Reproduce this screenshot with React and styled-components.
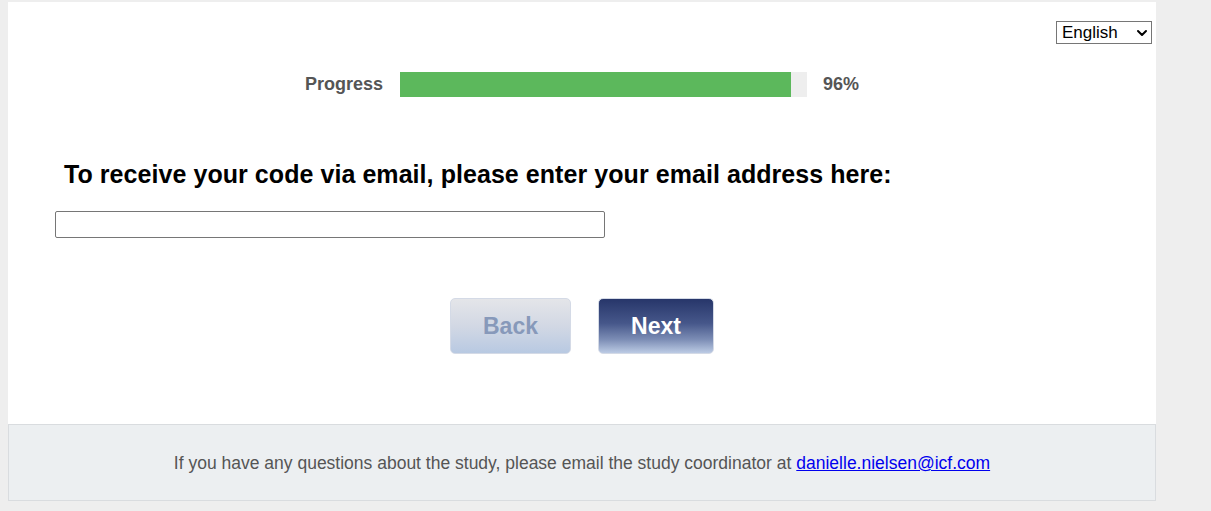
import styled, { createGlobalStyle } from 'styled-components'
import { ChevronDown } from 'lucide-react'

const GlobalStyle = createGlobalStyle`
  html, body {
    margin: 0;
    background: #eeeeee;
  }
  body {
    padding: 2px 0 0 8px;
    font-family: "Liberation Sans", Arial, sans-serif;
  }
`

const Page = styled.div`
  width: 1148px;
  background: #ffffff;
`

const Main = styled.div`
  display: flex;
  flex-direction: column;
  padding: 19px 4px 70px 0;
  height: 422px;
  box-sizing: border-box;
`

const TopBar = styled.div`
  display: flex;
  justify-content: flex-end;
`

const SelectWrap = styled.div`
  position: relative;
  width: 96px;
  height: 23px;

  svg {
    position: absolute;
    right: 2px;
    top: 4px;
    pointer-events: none;
    color: #000;
  }
`

const LangSelect = styled.select`
  appearance: none;
  font-family: "Liberation Sans", Arial, sans-serif;
  font-size: 17px;
  color: #000;
  background: #fff;
  border: 1px solid #767676;
  border-radius: 0;
  height: 23px;
  width: 96px;
  padding: 0 20px 0 5px;
`

const ProgressRow = styled.div`
  display: flex;
  align-items: center;
  justify-content: center;
  gap: 17px;
  margin-top: 28px;
  padding-left: 4px;
`

const ProgressLabel = styled.span`
  font-size: 18px;
  font-weight: bold;
  color: #555;
`

const Track = styled.div`
  width: 407px;
  height: 25px;
  background: #eeeeee;
`

const Fill = styled.div`
  height: 100%;
  background: #5cb85c;
`

const Percent = styled.span`
  font-size: 18px;
  font-weight: bold;
  color: #555;
  margin-left: -1px;
`

const Question = styled.h2`
  font-size: 25px;
  font-weight: bold;
  color: #000;
  margin: 62px 0 0 56px;
  line-height: 30px;
  letter-spacing: 0.06px;
`

const EmailInput = styled.input`
  margin: 22px 0 0 47px;
  width: 550px;
  height: 27px;
  box-sizing: border-box;
  border: 1px solid #767676;
  border-radius: 2px;
`

const Buttons = styled.div`
  display: flex;
  justify-content: center;
  gap: 27px;
  margin-top: 60px;
  padding-left: 4px;
`

const NavButton = styled.button`
  height: 56px;
  width: ${p => p.$width}px;
  border: 1px solid #d4dae6;
  border-radius: 5px;
  font-family: "Liberation Sans", Arial, sans-serif;
  font-size: 23px;
  font-weight: bold;
  color: ${p => (p.$primary ? '#ffffff' : '#8799ba')};
  background: ${p =>
    p.$primary
      ? 'linear-gradient(to bottom, #27366a 0%, #46578a 45%, #7c8db5 75%, #bccbe4 100%)'
      : 'linear-gradient(to bottom, #e4e5e9 0%, #d2d8e4 50%, #b8c9e2 100%)'};
`

const Footer = styled.div`
  height: 77px;
  box-sizing: border-box;
  background: #eceff1;
  border: 1px solid #d9dcdf;
  display: flex;
  align-items: center;
  justify-content: center;
  font-family: "Liberation Sans", Arial, sans-serif;
  font-size: 17.5px;
  color: #555;
  padding-top: 2px;
`

const Link = styled.a`
  color: #0000ee;
  margin-left: 5px;
`

export default function App() {
  const progress = 96
  return (
    <>
      <GlobalStyle />
      <Page>
        <Main>
          <TopBar>
            <SelectWrap>
              <LangSelect defaultValue="en">
                <option value="en">English</option>
              </LangSelect>
              <ChevronDown size={16} strokeWidth={3} />
            </SelectWrap>
          </TopBar>
          <ProgressRow>
            <ProgressLabel>Progress</ProgressLabel>
            <Track>
              <Fill style={{ width: `${progress}%` }} />
            </Track>
            <Percent>{progress}%</Percent>
          </ProgressRow>
          <Question>To receive your code via email, please enter your email address here:</Question>
          <EmailInput type="email" />
          <Buttons>
            <NavButton $width={121}>Back</NavButton>
            <NavButton $width={116} $primary>Next</NavButton>
          </Buttons>
        </Main>
        <Footer>
          If you have any questions about the study, please email the study coordinator at
          <Link href="#">danielle.nielsen@icf.com</Link>
        </Footer>
      </Page>
    </>
  )
}
